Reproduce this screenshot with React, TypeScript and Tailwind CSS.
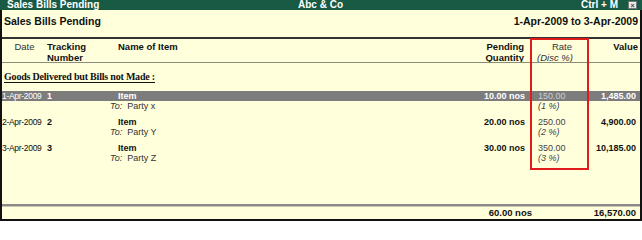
const rows = [
  { date: "1-Apr-2009", no: "1", party: "Party x", qty: "10.00 nos", rate: "150.00", disc: "(1 %)", value: "1,485.00", active: true },
  { date: "2-Apr-2009", no: "2", party: "Party Y", qty: "20.00 nos", rate: "250.00", disc: "(2 %)", value: "4,900.00", active: false },
  { date: "3-Apr-2009", no: "3", party: "Party Z", qty: "30.00 nos", rate: "350.00", disc: "(3 %)", value: "10,185.00", active: false },
];

export default function App() {
  return (
    <div className="relative w-[642px] h-[221px] flex flex-col bg-[#ffffdb] text-[#111] font-['Liberation_Sans',Arial,sans-serif] overflow-hidden">
      {/* title bar */}
      <div className="h-[10px] flex items-center bg-[#185a43] text-white text-[10px] font-bold leading-none whitespace-nowrap">
        <div className="w-[298px] pl-[7px]">Sales Bills Pending</div>
        <div className="flex-1">Abc &amp; Co</div>
        <div className="pr-[10px]">Ctrl + M</div>
        <div className="w-[9px] h-[8px] mr-[5px] bg-[#e8e8e8] border border-[#777] text-[#444] text-[7px] flex items-center justify-center">×</div>
      </div>

      <div className="flex-1 flex flex-col border-l-2 border-r-2 border-b-2 border-[#111]">
        {/* report header */}
        <div className="h-[27px] flex items-start justify-between pt-[4px] pl-[2px] pr-[2px] text-[10.5px] font-bold">
          <span>Sales Bills Pending</span>
          <span>1-Apr-2009 to 3-Apr-2009</span>
        </div>
        <div className="h-[2px] bg-[#333]" />

        {/* column headers */}
        <div className="h-[23px] flex pt-[2px] text-[9.5px] leading-[11px]">
          <div className="w-[45px] text-center text-[#333]">Date</div>
          <div className="w-[63px] font-bold">Tracking<br />Number</div>
          <div className="flex-1 pl-[8px] font-bold">Name of Item</div>
          <div className="w-[72px] pr-[8px] text-right font-bold">Pending<br />Quantity</div>
          <div className="w-[58px] pl-[5px] text-[#333]">
            <div className="w-[35px] text-right">Rate</div>
            <div className="italic">(Disc %)</div>
          </div>
          <div className="w-[50px] pr-[2px] text-right font-bold">Value</div>
        </div>
        <div className="h-px bg-[#8c8c7c]" />

        {/* section title */}
        <div className="h-[28px] pt-[6px] pl-[2px] font-['Liberation_Serif','Times_New_Roman',serif] text-[10px] tracking-[-0.2px] font-bold">
          <span className="underline underline-offset-2">Goods Delivered but Bills not Made :</span>
        </div>

        {rows.map((r) => (
          <div key={r.no} className="mb-[7px] text-[9px] leading-[10px] whitespace-nowrap">
            <div className={`h-[10px] flex ${r.active ? "bg-[#7c7c7c] text-white" : ""}`}>
              <div className="w-[45px] text-[8.5px] tracking-[-0.3px]">{r.date}</div>
              <div className="w-[63px] font-bold">{r.no}</div>
              <div className="flex-1 pl-[8px] font-bold">Item</div>
              <div className="w-[72px] pr-[7px] text-right font-bold">{r.qty}</div>
              <div className={`w-[58px] pl-[6px] ${r.active ? "text-[#cfcfcf]" : "text-[#444]"}`}>{r.rate}</div>
              <div className="w-[50px] pr-[4px] text-right font-bold">{r.value}</div>
            </div>
            <div className="h-[9px] flex">
              <div className="w-[108px]" />
              <div className="flex-1 text-[#333]">
                <span className="italic">To:</span>&nbsp; {r.party}
              </div>
              <div className="w-[72px]" />
              <div className="w-[58px] pl-[6px] italic text-[#444]">{r.disc}</div>
              <div className="w-[50px]" />
            </div>
          </div>
        ))}

        <div className="flex-1" />

        {/* totals */}
        <div className="h-[3px] border-t-2 border-[#8a8a8a] border-b border-b-[#c8c8b0]" />
        <div className="h-[12px] flex items-center text-[9.5px] font-bold whitespace-nowrap">
          <div className="flex-1" />
          <div className="w-[80px] pr-[8px] text-right">60.00 nos</div>
          <div className="w-[50px]" />
          <div className="w-[50px] pr-[4px] text-right">16,570.00</div>
        </div>
      </div>

      {/* highlight box */}
      <div className="absolute left-[530px] top-[38px] w-[59px] h-[132px] border-2 border-[#e01b1b]" />
    </div>
  );
}
